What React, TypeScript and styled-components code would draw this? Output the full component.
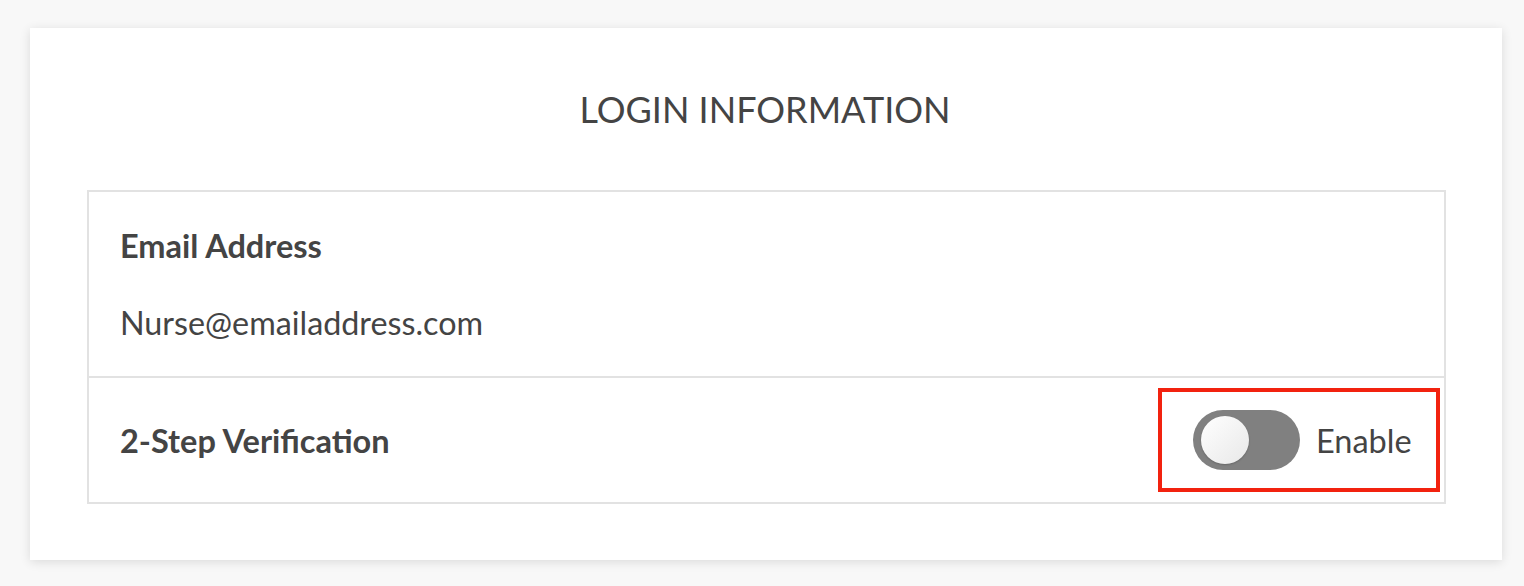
import styled, { createGlobalStyle } from 'styled-components'

const GlobalStyle = createGlobalStyle`
  html, body {
    margin: 0;
    padding: 0;
    background: #f8f8f8;
    font-family: Lato, "Open Sans", sans-serif;
    color: #444444;
  }
`

export default function App() {
  return (
    <>
      <GlobalStyle />
      <Page>
        <Card>
          <Title>LOGIN INFORMATION</Title>
          <Table>
            <Row $height={184}>
              <Stack>
                <Label>Email Address</Label>
                <Value>Nurse@emailaddress.com</Value>
              </Stack>
            </Row>
            <Row $height={126}>
              <Label>2-Step Verification</Label>
              <Highlight>
                <Toggle>
                  <Knob />
                </Toggle>
                <ToggleText>Enable</ToggleText>
              </Highlight>
            </Row>
          </Table>
        </Card>
      </Page>
    </>
  )
}

const Page = styled.div`
  padding: 28px 22px 26px 30px;
`

const Card = styled.div`
  background: #ffffff;
  box-shadow: 0 2px 10px rgba(0, 0, 0, 0.12);
  padding: 0 56px 56px 57px;
  display: flex;
  flex-direction: column;
`

const Title = styled.h1`
  margin: 0;
  height: 162px;
  padding-right: 3px;
  display: flex;
  align-items: center;
  justify-content: center;
  font-size: 36px;
  font-weight: 400;
  color: #444444;
`

const Table = styled.div`
  border: 2px solid #e2e2e2;
  display: flex;
  flex-direction: column;
`

const Row = styled.div<{ $height: number }>`
  height: ${(p) => p.$height}px;
  box-sizing: border-box;
  padding: 0 4px 0 31px;
  display: flex;
  align-items: center;
  justify-content: space-between;
  & + & {
    border-top: 2px solid #e2e2e2;
  }
`

const Stack = styled.div`
  display: flex;
  flex-direction: column;
  gap: 38px;
`

const Label = styled.div`
  font-size: 32.5px;
  font-weight: 700;
  color: #444444;
`

const Value = styled.div`
  font-size: 32.3px;
  font-weight: 400;
  color: #444444;
`

const Highlight = styled.div`
  border: 4px solid #f2220f;
  width: 282px;
  height: 104px;
  box-sizing: border-box;
  display: flex;
  align-items: center;
  padding-left: 31px;
  gap: 16px;
`

const Toggle = styled.div`
  width: 107px;
  height: 60px;
  border-radius: 30px;
  background: #808080;
  display: flex;
  align-items: center;
  padding-left: 8px;
  box-sizing: border-box;
`

const Knob = styled.div`
  width: 48px;
  height: 48px;
  border-radius: 50%;
  background: linear-gradient(135deg, #ffffff 0%, #e8e8e8 100%);
  box-shadow: 0 1px 2px rgba(0, 0, 0, 0.2);
`

const ToggleText = styled.div`
  font-size: 32.5px;
  font-weight: 400;
  color: #444444;
`
